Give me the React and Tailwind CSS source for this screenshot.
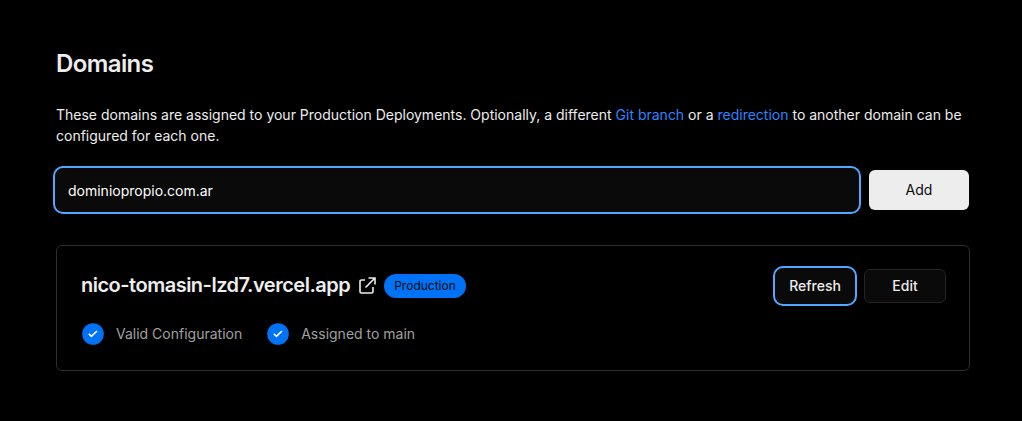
import React from "react";

const links = "text-[#2f84ff]";

function Status({ children }) {
  return (
    <li className="flex items-center gap-3">
      <svg width="22" height="22" viewBox="0 0 22 22" fill="none" aria-hidden="true">
        <circle cx="11" cy="11" r="10.8" fill="#0072f5" />
        <path d="M6.8 10.8l2.6 2.6L15 8" stroke="#fff" strokeWidth="1.6" />
      </svg>
      {children}
    </li>
  );
}

export default function App() {
  return (
    <main className="min-h-screen bg-black pt-12 pr-[52px] pb-12 pl-14 font-['Inter',sans-serif] text-sm text-[#ededed]">
      <div className="max-w-[914px]">
        <h1 className="text-2xl leading-8 font-semibold tracking-tight">Domains</h1>
        <p className="mt-6 leading-[21px]">
          These domains are assigned to your Production Deployments. Optionally, a different{" "}
          <a href="#git" className={links}>Git branch</a> or a{" "}
          <a href="#redirect" className={links}>redirection</a> to another domain can be configured for each one.
        </p>
        <form className="mt-5 mr-px -ml-[3px] flex items-center gap-2" onSubmit={(e) => e.preventDefault()}>
          <input
            aria-label="Domain"
            defaultValue="dominiopropio.com.ar"
            className="h-12 min-w-0 flex-1 rounded-[10px] border-2 border-[#52a8ff] bg-[#0a0a0a] px-[13px] text-white outline-none"
          />
          <button className="h-10 w-[100px] rounded-md bg-[#ededed] text-[#0a0a0a]">Add</button>
        </form>
        <section className="mt-[31px] rounded-md border border-[#2e2e2e] pt-5 pr-[23px] pb-[25px] pl-6">
          <div className="flex items-center justify-between gap-2">
            <div className="flex items-center gap-2">
              <h2 className="pb-0.5 text-xl leading-8 font-semibold tracking-tight">nico-tomasin-lzd7.vercel.app</h2>
              <svg width="18" height="18" viewBox="0 0 18 18" fill="none" stroke="currentColor" strokeWidth="1.6" aria-hidden="true">
                <path d="M7 3H3.5A1.5 1.5 0 0 0 2 4.5v10A1.5 1.5 0 0 0 3.500 16h10a1.500 1.500 0 0 0 1.500-1.500V10M10.500 1h6.500v6.500M17 1L7.500 10.500" />
              </svg>
              <span className="rounded-full bg-[#0072f5] px-[10px] text-xs leading-6 text-[#0a0a0a]">Production</span>
            </div>
            <div className="flex items-center gap-[7px]">
              <button className="h-10 w-21 rounded-[10px] border-2 border-[#52a8ff] bg-[#0a0a0a] font-medium">Refresh</button>
              <button className="h-[34px] w-[82px] rounded-md border border-[#242424] bg-[#0a0a0a] font-medium">Edit</button>
            </div>
          </div>
          <ul className="mt-[17px] ml-px flex gap-[25px] text-[#a1a1a1]">
            <Status>Valid Configuration</Status>
            <Status>Assigned to main</Status>
          </ul>
        </section>
      </div>
    </main>
  );
}
